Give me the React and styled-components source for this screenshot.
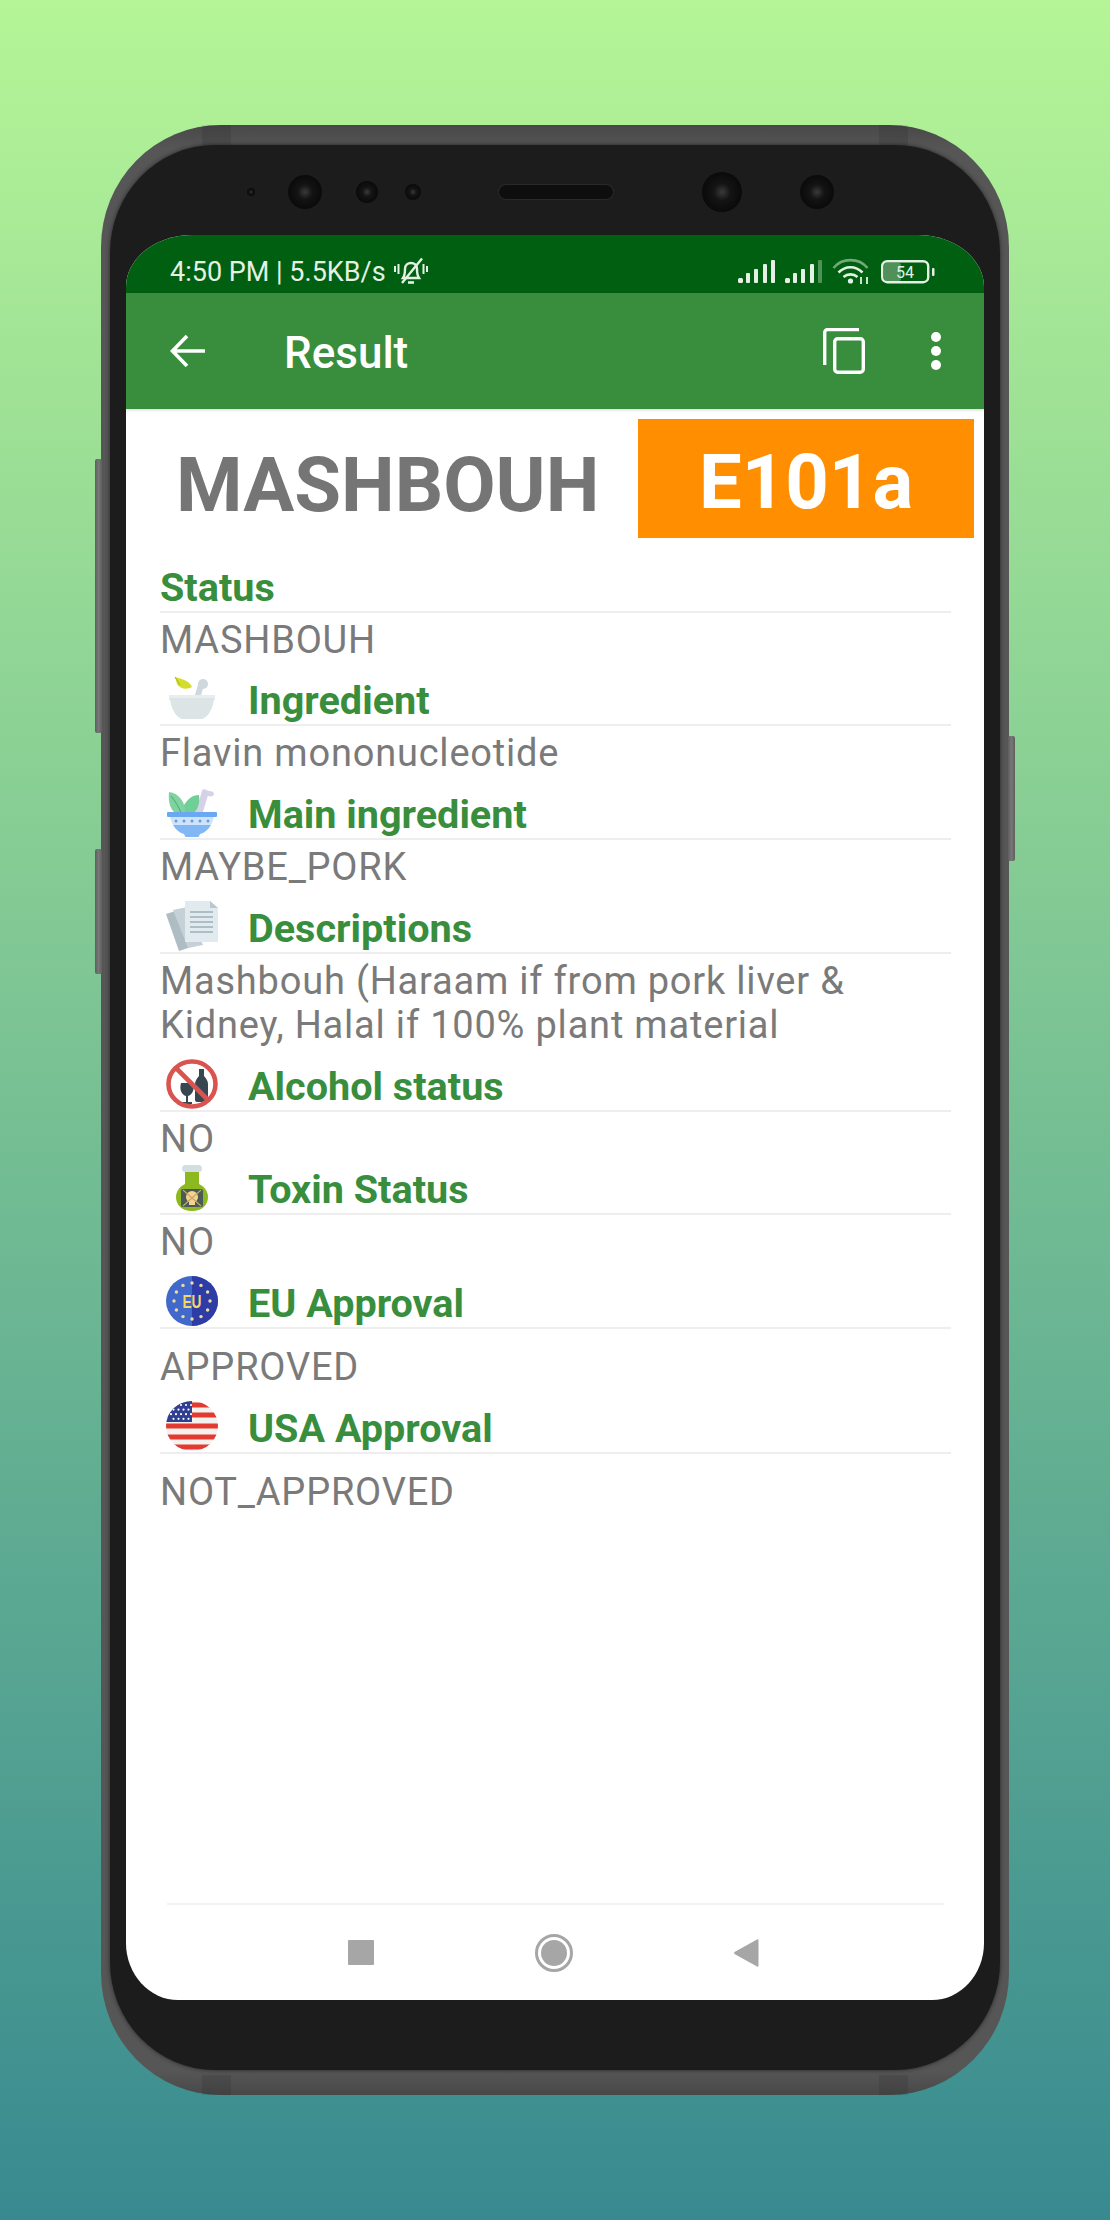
import React from 'react';
import styled, { createGlobalStyle } from 'styled-components';

const GlobalStyle = createGlobalStyle`
  html, body { margin: 0; padding: 0; }
  body { font-family: Roboto, "Liberation Sans", sans-serif; }
`;

const Page = styled.div`
  width: 1110px;
  height: 2220px;
  box-sizing: border-box;
  padding: 125px 100px 0 101px;
  background: linear-gradient(180deg, #b5f597 0%, #388a90 100%);
  overflow: hidden;
`;

const Phone = styled.div`
  position: relative;
  width: 908px;
  height: 1970px;
  box-sizing: border-box;
  padding: 20px 9px 25px;
  border-radius: 120px / 122px;
  background: linear-gradient(180deg, #484848 0%, #565656 1.2%, #565656 98.8%, #484848 100%);
`;

const SideKey = styled.div`
  position: absolute;
  top: ${p => p.$top}px;
  height: ${p => p.$height}px;
  width: 7px;
  ${p => (p.$right ? 'right: -6px;' : 'left: -6px;')}
  border-radius: 2px;
  background: linear-gradient(90deg, #5e5e5e, #777 50%, #5e5e5e);
`;

const Antenna = styled.div`
  position: absolute;
  width: 29px;
  height: 20px;
  left: ${p => p.$left}px;
  ${p => (p.$bottom ? 'bottom: 0;' : 'top: 0;')}
  background: rgba(0, 0, 0, 0.09);
`;

const Bezel = styled.div`
  height: 100%;
  box-sizing: border-box;
  padding: 0 16px 70px;
  display: flex;
  flex-direction: column;
  border-radius: 105px / 108px;
  background: #1c1c1c;
  box-shadow: 0 0 4px #262626;
`;

const SensorRow = styled.div`
  flex: none;
  height: 90px;
  box-sizing: border-box;
  padding: 4px 0 0 106px;
  display: flex;
  align-items: center;
`;

const Lens = styled.div`
  flex: none;
  width: ${p => p.$size}px;
  height: ${p => p.$size}px;
  margin-left: ${p => p.$lead}px;
  border-radius: 50%;
  background: radial-gradient(circle at 50% 50%, #3a3a3a 0%, #141414 30%, #0a0a0a 70%, #161616 100%);
`;

const Speaker = styled.div`
  flex: none;
  width: 114px;
  height: 14px;
  margin-left: ${p => p.$lead}px;
  border-radius: 7px;
  background: #0e0e0e;
  box-shadow: 0 0 0 1px #2a2a2a;
`;

const Screen = styled.div`
  flex: 1;
  display: flex;
  flex-direction: column;
  overflow: hidden;
  background: #fff;
  border-radius: 66px 66px 52px 52px / 52px 52px 57px 57px;
`;

const StatusBar = styled.div`
  flex: none;
  height: 58px;
  box-sizing: border-box;
  padding: 15px 49px 0 44px;
  display: flex;
  align-items: center;
  background: #005f10;
  color: #e4f1e4;
`;

const StatusText = styled.span`
  font-size: 27px;
  line-height: 28px;
  margin-right: 7px;
`;

const StatusIcons = styled.div`
  margin-left: auto;
  display: flex;
  align-items: center;
  gap: 9px;
`;

const BatterySlot = styled.span`
  display: flex;
  margin-left: 2px;
`;

const AppBar = styled.div`
  flex: none;
  height: 116px;
  box-sizing: border-box;
  padding: 0 43px 0 44px;
  display: flex;
  align-items: center;
  background: #388e3c;
  color: #fff;
  box-shadow: 0 1px 3px rgba(0, 0, 0, 0.18);
  position: relative;
`;

const AppTitle = styled.h1`
  margin: 3px 0 0 78px;
  font-size: 44px;
  line-height: 48px;
  font-weight: 500;
  flex: 1;
`;

const Dots = styled.div`
  margin-left: 66px;
  display: flex;
  flex-direction: column;
  gap: 4px;
  i {
    display: block;
    width: 10px;
    height: 10px;
    border-radius: 50%;
    background: #fff;
  }
`;

const Content = styled.div`
  flex: 1;
  display: flex;
  flex-direction: column;
  min-height: 0;
`;

const Banner = styled.div`
  flex: none;
  height: 119px;
  margin-top: 10px;
  padding: 0 10px 0 50px;
  display: flex;
  align-items: center;
  justify-content: space-between;
`;

const Verdict = styled.div`
  font-size: 76px;
  font-weight: 700;
  line-height: 119px;
  padding-top: 7px;
  height: 119px;
  box-sizing: border-box;
  color: #757575;
`;

const Code = styled.div`
  width: 336px;
  height: 119px;
  box-sizing: border-box;
  padding-top: 7px;
  display: flex;
  align-items: center;
  justify-content: center;
  font-size: 76px;
  font-weight: 700;
  color: #fff;
  background: #ff8f00;
`;

const Rows = styled.div`
  flex: 1;
  padding: 0 33px 0 34px;
`;

const Head = styled.div`
  height: ${p => p.$height}px;
  box-sizing: border-box;
  display: flex;
  align-items: flex-end;
  border-bottom: 2px solid #eeeeee;
`;

const IconSlot = styled.div`
  flex: none;
  width: 52px;
  height: 50px;
  margin: 0 30px 1px 6px;
  svg { display: block; }
`;

const Label = styled.div`
  font-size: 39.6px;
  line-height: 42px;
  font-weight: 700;
  color: #388e3c;
  padding-bottom: 2px;
`;

const Value = styled.div`
  font-size: 38px;
  line-height: 44px;
  letter-spacing: 0.8px;
  color: #7a7a7a;
  padding-top: ${p => p.$top}px;
`;

const NavBar = styled.div`
  flex: none;
  height: 97px;
  margin: 0 40px 0 41px;
  box-sizing: border-box;
  border-top: 2px solid #f2f2f2;
  padding: 0 185px 0 181px;
  display: flex;
  align-items: center;
  justify-content: space-between;
`;

const NavSquare = styled.div`
  width: 26px;
  height: 25px;
  border-radius: 1px;
  background: #a6a6a6;
`;

const NavHome = styled.div`
  width: 38px;
  height: 38px;
  box-sizing: border-box;
  border: 3px solid #a6a6a6;
  border-radius: 50%;
  padding: 3px;
  &::after {
    content: '';
    display: block;
    width: 100%;
    height: 100%;
    border-radius: 50%;
    background: #a6a6a6;
  }
`;

const BackArrow = () => (
  <svg width="36" height="34" viewBox="0 0 36 34" fill="none" stroke="#fff" strokeWidth="3.6">
    <path d="M35 17H3M17 2 2.5 17 17 32" />
  </svg>
);

const CopyIcon = () => (
  <svg width="42" height="46" viewBox="0 0 42 46" fill="none" stroke="#fff" strokeWidth="3.4">
    <path d="M1.7 37V4.5a3 3 0 0 1 3-3H36" />
    <rect x="11.7" y="10.7" width="28.6" height="33.6" rx="3" />
  </svg>
);

const MuteBell = () => (
  <svg width="36" height="29" viewBox="0 0 36 29" fill="none" stroke="#e4f1e4" strokeWidth="2.4">
    <path d="M10 21c2-3 2-6 2-9 0-4 3-6 6-6s6 2 6 6c0 3 0 6 2 9z" />
    <path d="M15 25.5h6" strokeWidth="2.6" />
    <path d="M9 26 29 1.5" />
    <path d="M2 9v6M5.5 7v10M30.5 7v10M34 9v6" strokeWidth="2" />
  </svg>
);

const Signal = ({ dim }) => (
  <svg width="38" height="24" viewBox="0 0 38 24" fill="#e4f1e4">
    <rect x="0" y="18" width="5" height="5" rx="1.5" />
    <rect x="8" y="13" width="4" height="10" rx="1" />
    <rect x="16" y="9" width="4" height="14" rx="1" />
    <rect x="25" y="4" width="4" height="19" rx="1" />
    <rect x="33" y="0" width="4" height="23" rx="1" opacity={dim ? 0.35 : 1} />
  </svg>
);

const Wifi = () => (
  <svg width="38" height="27" viewBox="0 0 38 27" fill="none" stroke="#e4f1e4" strokeWidth="2.6">
    <path d="M1.5 10C10-.5 27-.5 35.5 10" opacity="0.5" />
    <path d="M6.5 14.5c7-7 17-7 24 0" />
    <path d="M11.5 19c4-3.5 10-3.5 14 0" />
    <circle cx="18.5" cy="23" r="2.6" fill="#e4f1e4" stroke="none" />
    <path d="M29 26v-7M35 19v7" strokeWidth="1.8" />
  </svg>
);

const Battery = () => (
  <svg width="54" height="24" viewBox="0 0 54 24">
    <rect x="3" y="3" width="17" height="18" rx="2" fill="#e4f1e4" opacity="0.35" />
    <rect x="1.2" y="1.2" width="46" height="21" rx="5" fill="none" stroke="#e4f1e4" strokeWidth="2.4" />
    <rect x="51" y="8" width="2.5" height="8" rx="1" fill="#e4f1e4" />
    <text x="24" y="18" fontSize="16" textAnchor="middle" fill="#e4f1e4" fontFamily="Roboto, sans-serif">54</text>
  </svg>
);

const MortarLeaf = () => (
  <svg width="52" height="50" viewBox="0 0 52 50">
    <path d="M9 4c7 2 15 4 17 10-5 3-12 2-15-3z" fill="#d4dc2e" />
    <path d="M9 4l5 8" stroke="#a7b81c" strokeWidth="1" />
    <path d="M32 22l3-10" stroke="#cfd8dc" strokeWidth="6" strokeLinecap="round" />
    <circle cx="37" cy="11" r="5" fill="#cfd8dc" />
    <path d="M3 22h46v4l-1 1c-2 10-6 17-12 19H16C10 44 6 37 4 27l-1-1z" fill="#dde4e6" />
    <path d="M3 22h46v3H3z" fill="#e8edef" />
  </svg>
);

const MortarHerb = () => (
  <svg width="52" height="50" viewBox="0 0 52 50">
    <path d="M33 26 39 6" stroke="#d5d2e8" strokeWidth="7" />
    <path d="M36 3c3-2 5 1 7 1 3 0 5 1 5 3s-3 3-6 2c-3 0-7-2-6-6z" fill="#d5d2e8" />
    <path d="M14 26C20 12 26 8 33 8c1 8-1 14-5 18z" fill="#6fcf97" />
    <path d="M3 5c10 1 17 11 16 21H9C4 22 2 14 3 5z" fill="#7fd3a0" />
    <path d="M5 9c4 5 8 11 10 17" stroke="#4aa873" strokeWidth="1" fill="none" />
    <rect x="1" y="25" width="50" height="5" rx="1" fill="#6aa9f2" />
    <path d="M4 30h44c-1 3-2 6-3 8H7c-1-2-2-5-3-8z" fill="#cfe4fb" />
    <path d="M7 38h38c-3 5-7 8-11 9-1 2-1 3-2 3H20c-1 0-1-1-2-3-4-1-8-4-11-9z" fill="#82b7f5" />
    <g fill="#5f9de8">
      <circle cx="10" cy="34" r="1.5" /><circle cx="18" cy="34" r="1.5" /><circle cx="26" cy="34" r="1.5" />
      <circle cx="34" cy="34" r="1.5" /><circle cx="42" cy="34" r="1.5" />
    </g>
  </svg>
);

const Papers = () => (
  <svg width="52" height="50" viewBox="0 0 52 50">
    <path d="M0 13 13 9l12 37-12 4z" fill="#aebcc3" />
    <path d="M7 9l14-3 16 38-15 3z" fill="#c5d1d7" />
    <path d="M19 0h25l8 7v34H19z" fill="#e0eaef" />
    <path d="M44 0v7h8z" fill="#b9c8cf" />
    <path d="M24 11h23M24 16h23M24 21h23M24 26h23M24 31h23" stroke="#9fb0b8" strokeWidth="1.4" />
  </svg>
);

const NoAlcohol = () => (
  <svg width="52" height="50" viewBox="0 0 52 50">
    <path d="M33 10h5v7c2 2 4 5 4 8v16c0 1-1 2-2 2H31c-1 0-2-1-2-2V25c0-3 2-6 4-8z" fill="#38474f" />
    <path d="M15 24h12c2 7-1 12-5 13v6h4v2H16v-2h4v-6c-4-1-7-6-5-13z" fill="#38474f" />
    <ellipse cx="26" cy="25" rx="23.5" ry="22.5" fill="none" stroke="#d9534f" strokeWidth="4.6" />
    <path d="M10 9l32 32" stroke="#d9534f" strokeWidth="4.6" />
  </svg>
);

const Flask = () => (
  <svg width="52" height="50" viewBox="0 0 52 50">
    <rect x="16" y="3" width="20" height="7" rx="3.5" fill="#d3dee3" />
    <path d="M19 10h14v12c6 3 9 8 9 13 0 8-6 14-16 14S10 43 10 35c0-5 3-10 9-13z" fill="#8cb820" />
    <rect x="15" y="27" width="22" height="18" rx="2" fill="#4b5a55" />
    <circle cx="26" cy="35" r="6" fill="#f7d28e" />
    <rect x="23" y="39" width="6" height="4" fill="#f7d28e" />
    <path d="M17 28l18 16M35 28 17 44" stroke="#c1a86b" strokeWidth="1.2" />
  </svg>
);

const stars = [...Array(12)].map((_, i) => ({
  x: 26 + 18 * Math.cos((i * Math.PI) / 6),
  y: 25 + 18 * Math.sin((i * Math.PI) / 6),
}));

const EuFlag = () => (
  <svg width="52" height="50" viewBox="0 0 52 50">
    <ellipse cx="26" cy="25" rx="26" ry="25" fill="#4169cb" />
    <path d="M26 0a26 25 0 0 1 0 50z" fill="#2e3da6" />
    {stars.map((s, i) => <circle key={i} cx={s.x} cy={s.y} r="1.7" fill="#f1dca0" />)}
    <text x="26" y="32" fontSize="19" fontWeight="700" textAnchor="middle" textLength="19" lengthAdjust="spacingAndGlyphs" fill="#f5d66c" fontFamily="'Liberation Sans', sans-serif">EU</text>
  </svg>
);

const usDots = [...Array(20)].map((_, i) => ({ x: 5 + ((i % 5) * 5) + (Math.floor(i / 5) % 2) * 2.5, y: 4 + Math.floor(i / 5) * 4.6 }));

const UsFlag = () => (
  <svg width="52" height="50" viewBox="0 0 52 50">
    <defs>
      <clipPath id="usDisc"><ellipse cx="26" cy="25" rx="26" ry="25" /></clipPath>
    </defs>
    <g clipPath="url(#usDisc)">
      <rect width="52" height="50" fill="#f4f1ef" />
      <path d="M0 4h52M0 14h52M0 25h52M0 36h52M0 46h52" stroke="#e23a31" strokeWidth="5" />
      <rect width="26" height="21" fill="#2f3f92" />
      {usDots.map((d, i) => <circle key={i} cx={d.x} cy={d.y} r="1.1" fill="#fff" />)}
    </g>
  </svg>
);

const rows = [
  { label: 'Status', value: 'MASHBOUH', head: 75, top: 5 },
  { label: 'Ingredient', value: 'Flavin mononucleotide', head: 64, top: 5, Icon: MortarLeaf },
  { label: 'Main ingredient', value: 'MAYBE_PORK', head: 65, top: 5, Icon: MortarHerb },
  { label: 'Descriptions', value: 'Mashbouh (Haraam if from pork liver & Kidney, Halal if 100% plant material', head: 65, top: 5, Icon: Papers },
  { label: 'Alcohol status', value: 'NO', head: 65, top: 5, Icon: NoAlcohol },
  { label: 'Toxin Status', value: 'NO', head: 54, top: 5, Icon: Flask },
  { label: 'EU Approval', value: 'APPROVED', head: 65, top: 16, Icon: EuFlag },
  { label: 'USA Approval', value: 'NOT_APPROVED', head: 65, top: 16, Icon: UsFlag },
];

const lenses = [
  { size: 8, lead: 15 },
  { size: 34, lead: 33 },
  { size: 22, lead: 34 },
  { size: 16, lead: 27 },
];

export default function App() {
  return (
    <Page>
      <GlobalStyle />
      <Phone>
        <SideKey $top={334} $height={274} />
        <SideKey $top={724} $height={125} />
        <SideKey $top={611} $height={125} $right />
        <Antenna $left={101} />
        <Antenna $left={778} />
        <Antenna $left={101} $bottom />
        <Antenna $left={778} $bottom />
        <Bezel>
          <SensorRow>
            {lenses.map((l, i) => <Lens key={i} $size={l.size} $lead={l.lead} />)}
            <Speaker $lead={78} />
            <Lens $size={40} $lead={89} />
            <Lens $size={34} $lead={58} />
          </SensorRow>
          <Screen>
            <StatusBar>
              <StatusText>4:50 PM | 5.5KB/s</StatusText>
              <MuteBell />
              <StatusIcons>
                <Signal />
                <Signal dim />
                <Wifi />
                <BatterySlot><Battery /></BatterySlot>
              </StatusIcons>
            </StatusBar>
            <AppBar>
              <BackArrow />
              <AppTitle>Result</AppTitle>
              <CopyIcon />
              <Dots><i /><i /><i /></Dots>
            </AppBar>
            <Content>
              <Banner>
                <Verdict>MASHBOUH</Verdict>
                <Code>E101a</Code>
              </Banner>
              <Rows>
                {rows.map(({ label, value, head, top, Icon }) => (
                  <div key={label}>
                    <Head $height={head}>
                      {Icon && <IconSlot><Icon /></IconSlot>}
                      <Label>{label}</Label>
                    </Head>
                    <Value $top={top}>{value}</Value>
                  </div>
                ))}
              </Rows>
              <NavBar>
                <NavSquare />
                <NavHome />
                <svg width="26" height="30" viewBox="0 0 26 30">
                  <path d="M24 1.5a1 1 0 0 1 1.5 1v25a1 1 0 0 1-1.5 1L1.5 16a1.5 1.5 0 0 1 0-2z" fill="#a6a6a6" />
                </svg>
              </NavBar>
            </Content>
          </Screen>
        </Bezel>
      </Phone>
    </Page>
  );
}
